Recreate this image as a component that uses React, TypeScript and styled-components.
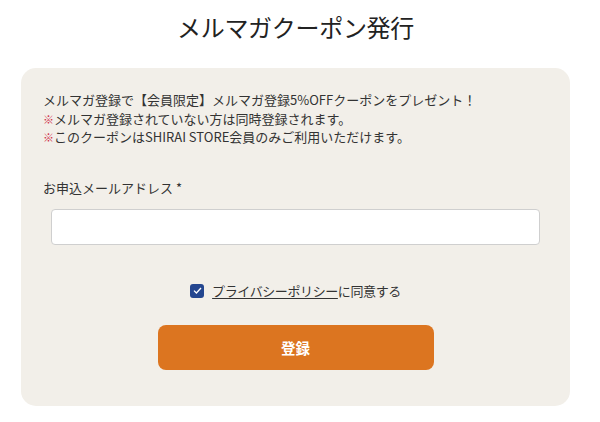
import React from "react";
import styled, { createGlobalStyle } from "styled-components";

const GlobalStyle = createGlobalStyle`
    body {
        margin: 0;
        background: #ffffff;
        font-family: "Noto Sans CJK JP", "Noto Sans", sans-serif;
        color: #333333;
    }
`;

const App: React.FC = () => {
    return (
        <Page>
            <GlobalStyle />
            <Title>メルマガクーポン発行</Title>
            <Card>
                <Notice>
                    <p>メルマガ登録で【会員限定】メルマガ登録5%OFFクーポンをプレゼント！</p>
                    <p>
                        <Mark>※</Mark>メルマガ登録されていない方は同時登録されます。
                    </p>
                    <p>
                        <Mark>※</Mark>このクーポンはSHIRAI STORE会員のみご利用いただけます。
                    </p>
                </Notice>
                <Label htmlFor="email">お申込メールアドレス *</Label>
                <Input id="email" type="email" />
                <Agree>
                    <CheckBox>
                        <svg width="9" height="7" viewBox="0 0 9 7">
                            <path
                                d="M1 3.6 L3.4 6 L8 1"
                                fill="none"
                                stroke="#ffffff"
                                strokeWidth="1.3"
                            />
                        </svg>
                    </CheckBox>
                    <PolicyLink>プライバシーポリシー</PolicyLink>に同意する
                </Agree>
                <SubmitButton>登録</SubmitButton>
            </Card>
        </Page>
    );
};

const Page = styled.div`
    width: 549px;
    margin-left: 21px;
`;

const Title = styled.h1`
    margin: 0;
    padding-top: 9px;
    height: 59px;
    font-size: 24px;
    font-weight: 400;
    line-height: 36px;
    text-align: center;
    color: #222222;
    letter-spacing: -0.3px;
`;

const Card = styled.div`
    display: flex;
    flex-direction: column;
    background: #f2efe9;
    border-radius: 15px;
    padding: 23px 22px 36px;
`;

const Notice = styled.div`
    font-size: 13px;
    line-height: 18.5px;
    color: #333333;
    p {
        margin: 0;
    }
`;

const Mark = styled.span`
    color: #d0304a;
    font-size: 11px;
`;

const Label = styled.label`
    margin-top: 32px;
    font-size: 13px;
    line-height: 18px;
    color: #333333;
`;

const Input = styled.input`
    box-sizing: border-box;
    margin: 12px 8px 0;
    height: 36px;
    background: #ffffff;
    border: 1px solid #cfcfcf;
    border-radius: 4px;
    outline: none;
`;

const Agree = styled.div`
    display: flex;
    align-items: center;
    justify-content: center;
    margin-top: 37px;
    font-size: 13px;
    letter-spacing: -0.4px;
    line-height: 18px;
    color: #333333;
`;

const CheckBox = styled.span`
    display: inline-flex;
    align-items: center;
    justify-content: center;
    width: 14px;
    height: 14px;
    margin-right: 8px;
    background: #24468f;
    border-radius: 3px;
`;

const PolicyLink = styled.span`
    text-decoration: underline;
    text-underline-offset: 2px;
`;

const SubmitButton = styled.button`
    align-self: center;
    width: 276px;
    height: 45px;
    margin-top: 25px;
    background: #dc7520;
    border: none;
    border-radius: 8px;
    color: #ffffff;
    font-family: "Noto Sans CJK JP", "Noto Sans", sans-serif;
    font-size: 14.5px;
    font-weight: 700;
`;

export default App;
